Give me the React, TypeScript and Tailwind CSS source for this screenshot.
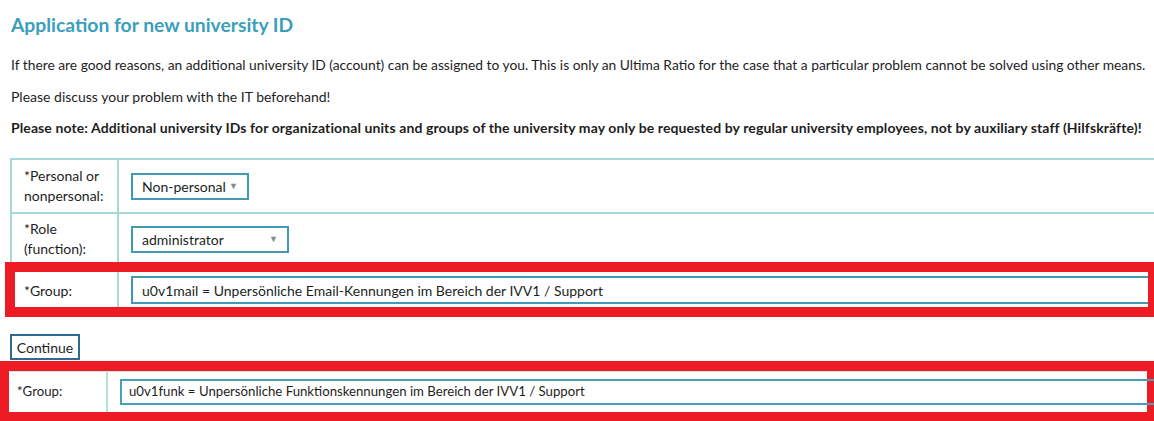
import React from 'react'

const rowBorder = 'border-[#a5d9d7]'

function Select({ value, width }: { value: string; width: string }) {
  return (
    <div
      className={`flex h-[27px] items-center justify-between border-2 border-[#4199b3] pl-[9px] pr-[9px] ${width}`}
    >
      <span>{value}</span>
      <span className="text-[9px] text-[#8a8a8a]">▼</span>
    </div>
  )
}

export default function App() {
  return (
    <div className="relative h-[421px] w-[1154px] overflow-hidden bg-white font-['Lato',sans-serif] text-[14px] text-[#1e1e1e]">
      <div className="pl-[11px] pt-[12px]">
        <h1 className="text-[19.3px] font-bold leading-[26px] text-[#3b9fbb]">
          Application for new university ID
        </h1>
        <p className="mt-[17px] whitespace-nowrap text-[13.8px] leading-[20px]">
          If there are good reasons, an additional university ID (account) can be assigned to you. This is only an
          Ultima Ratio for the case that a particular problem cannot be solved using other means.
        </p>
        <p className="mt-[12px] leading-[20px]">Please discuss your problem with the IT beforehand!</p>
        <p className="mt-[11px] whitespace-nowrap font-bold leading-[20px] tracking-[0.1px]">
          Please note: Additional university IDs for organizational units and groups of the university may only be
          requested by regular university employees, not by auxiliary staff (Hilfskräfte)!
        </p>
      </div>

      {/* form table */}
      <div className={`ml-[10px] mt-[20px] w-[1200px] border-l-2 border-t-2 ${rowBorder}`}>
        <div className={`flex h-[54px] border-b-2 ${rowBorder}`}>
          <div className={`flex w-[107px] shrink-0 items-center border-r-2 pl-[12px] leading-[20px] ${rowBorder}`}>
            <span>
              *Personal or
              <br />
              nonpersonal:
            </span>
          </div>
          <div className="flex items-center pl-[12px]">
            <Select value="Non-personal" width="w-[118px]" />
          </div>
        </div>
        <div className={`flex h-[52px] border-b-2 ${rowBorder}`}>
          <div className={`flex w-[107px] shrink-0 items-center border-r-2 pl-[12px] leading-[20px] ${rowBorder}`}>
            <span>
              *Role
              <br />
              (function):
            </span>
          </div>
          <div className="flex items-center pl-[12px]">
            <Select value="administrator" width="w-[158px]" />
          </div>
        </div>
        <div className={`flex h-[50px] border-b-2 ${rowBorder}`}>
          <div className={`flex w-[107px] shrink-0 items-center border-r-2 pl-[12px] ${rowBorder}`}>*Group:</div>
          <div className="flex items-center pl-[12px]">
            <div className="flex h-[28px] w-[1100px] shrink-0 items-center border-2 border-[#4199b3] pl-[9px]">
              u0v1mail = Unpersönliche Email-Kennungen im Bereich der IVV1 / Support
            </div>
          </div>
        </div>
      </div>

      <button className="ml-[10px] mt-[18px] flex h-[26px] w-[70px] items-center justify-center border-2 border-[#2f6a8f] bg-white text-[#1e1e1e]">
        Continue
      </button>

      {/* second screenshot fragment, marked in red */}
      <div className="mt-[1px] h-[61px] w-[1157px] border-[10px] border-l-[9px] border-[#ed1c24] bg-white">
        <div className="flex h-full border-t border-[#cfe3e8] text-[13.2px]">
          <div className="flex w-[99px] shrink-0 items-center border-r-2 border-[#b9dfdd] pl-[8px]">*Group:</div>
          <div className="flex items-center pl-[12px]">
            <div className="flex h-[26px] w-[1100px] shrink-0 items-center border-2 border-[#46a0b8] pl-[7px]">
              u0v1funk = Unpersönliche Funktionskennungen im Bereich der IVV1 / Support
            </div>
          </div>
        </div>
      </div>

      {/* red annotation over the group row */}
      <div className="absolute left-[5px] top-[262px] h-[55px] w-[1153px] border-[10px] border-[#ed1c24]" />
    </div>
  )
}
